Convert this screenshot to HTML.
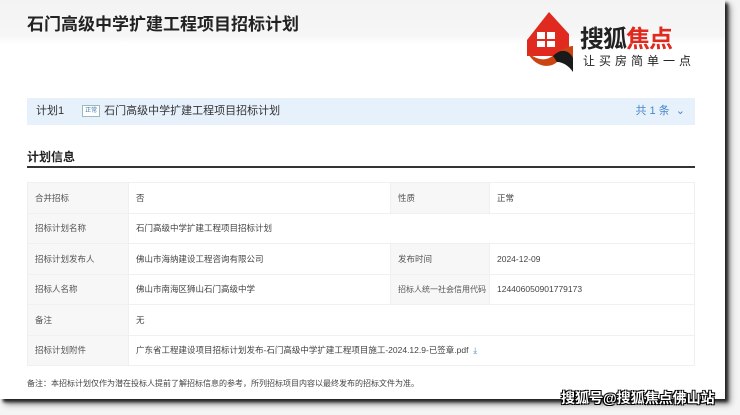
<!DOCTYPE html>
<html><head><meta charset="utf-8"><style>
*{margin:0;padding:0;box-sizing:border-box}
body{width:740px;height:415px;background:#f4f4f4;font-family:"Liberation Sans","Noto Sans CJK SC",sans-serif;position:relative;overflow:hidden;color:#333}
.page{position:absolute;left:0;top:0;width:725px;height:399px;background:#fff;box-shadow:3px 3px 3px #222,5px 5px 6px #888}
.hdr{position:absolute;left:0;top:0;width:725px;height:44px;background:linear-gradient(180deg,#f3f3f3,#f6f6f6 80%,#fff)}
.title{position:absolute;left:27px;top:10px;font-size:17px;font-weight:bold;color:#222}
.bar{position:absolute;left:27px;top:98px;width:668px;height:27px;background:#e6f1fb;font-size:11px;line-height:27px}
.tag{display:inline-block;border:1px solid #9bb;font-size:6px;line-height:10px;padding:0 2px;color:#47a;vertical-align:middle;margin:0 4px 0 0;background:#fff}
.sec{position:absolute;left:27px;top:148px;font-size:12px;font-weight:bold;color:#222}
.line{position:absolute;left:27px;top:166px;width:668px;height:2px;background:#333}
table{position:absolute;left:27px;top:182px;width:668px;border-collapse:collapse;font-size:8.5px;color:#444;table-layout:fixed}
td{height:30.5px;border:1px solid #f0f0f0;padding-left:7px;white-space:nowrap;overflow:hidden}
td.l{background:#f7f7f7;color:#555}
.note{position:absolute;left:27px;top:378px;font-size:8px;color:#444}
.wm{position:absolute;left:561px;top:388px;font-size:14px;font-weight:bold;color:#fff;text-shadow:1px 1px 0 #000,-1px -1px 0 #000,1px -1px 0 #000,-1px 1px 0 #000}
</style></head><body>
<div class="page">
<div class="hdr"></div>
<div class="title">石门高级中学扩建工程项目招标计划</div>
<svg style="position:absolute;left:523px;top:10px" width="56" height="62" viewBox="0 0 56 62">
<path d="M4 30 L26 2 L46 24 L46 46 L4 46 Z" fill="#e02a1f"/>
<rect x="14" y="22" width="18" height="15" fill="#fff"/><rect x="22" y="22" width="2" height="15" fill="#e02a1f"/><rect x="14" y="29" width="18" height="2" fill="#e02a1f"/>
<path d="M4 42 C14 60,30 58,36 50 C40 44,44 48,50 60 L50 36 C42 36,34 44,26 48 C18 52,8 46,4 42Z" fill="#c41"/>
<path d="M30 46 C38 38,46 40,50 48 L50 62 C46 56,40 52,34 52Z" fill="#1a1a1a"/>
</svg>
<div style="position:absolute;left:580px;top:19px;font-size:24px;font-weight:bold;letter-spacing:-1px"><span style="color:#222">搜狐</span><span style="color:#e02a1f">焦点</span></div>
<div style="position:absolute;left:583px;top:52px;font-size:12px;letter-spacing:4px;color:#222">让买房简单一点</div>
<div class="bar"><span style="margin-left:9px;margin-right:18px">计划1</span><span class="tag">正常</span>石门高级中学扩建工程项目招标计划<span style="position:absolute;right:10px;color:#4a86c8">共 1 条 &nbsp;⌄</span></div>
<div class="sec">计划信息</div><div class="line"></div>
<table>
<colgroup><col style="width:101px"><col style="width:262px"><col style="width:99px"><col></colgroup>
<tr><td class="l">合并招标</td><td>否</td><td class="l">性质</td><td>正常</td></tr>
<tr><td class="l">招标计划名称</td><td colspan="3">石门高级中学扩建工程项目招标计划</td></tr>
<tr><td class="l">招标计划发布人</td><td>佛山市海纳建设工程咨询有限公司</td><td class="l">发布时间</td><td>2024-12-09</td></tr>
<tr><td class="l">招标人名称</td><td>佛山市南海区狮山石门高级中学</td><td class="l" style="font-size:8px">招标人统一社会信用代码</td><td>124406050901779173</td></tr>
<tr><td class="l">备注</td><td colspan="3">无</td></tr>
<tr><td class="l">招标计划附件</td><td colspan="3">广东省工程建设项目招标计划发布-石门高级中学扩建工程项目施工-2024.12.9-已签章.pdf &nbsp;<span style="color:#4a86c8">⤓</span></td></tr>
</table>
<div class="note">备注：本招标计划仅作为潜在投标人提前了解招标信息的参考，所列招标项目内容以最终发布的招标文件为准。</div>
<div class="wm">搜狐号@搜狐焦点佛山站</div>
</div>
</body></html>
